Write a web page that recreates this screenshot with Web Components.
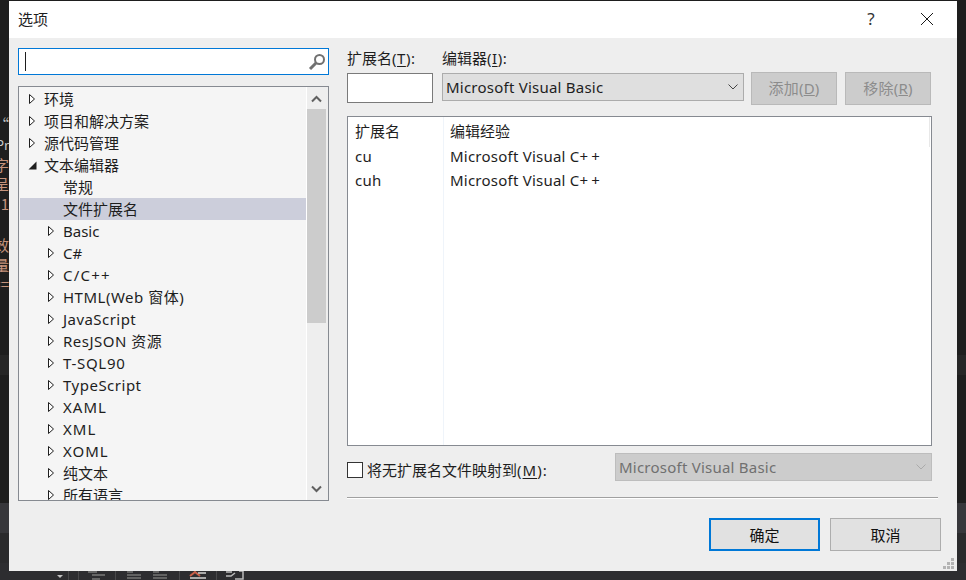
<!DOCTYPE html>
<html>
    <head>
        <meta charset="utf-8" />
        <title>选项</title>
        <style>
            html, body {
                margin: 0;
                width: 966px;
                height: 580px;
                overflow: hidden;
                background: #1e1e1e;
                font-family: "Noto Sans", "Noto Sans CJK SC", sans-serif;
            }
        </style>
    </head>
    <body>
        <ide-backdrop>
            <options-dialog>
                <tree-view slot="tree">
                    <tree-row arrow="closed">环境</tree-row>
                    <tree-row arrow="closed">项目和解决方案</tree-row>
                    <tree-row arrow="closed">源代码管理</tree-row>
                    <tree-row arrow="open">文本编辑器</tree-row>
                    <tree-row level="1">常规</tree-row>
                    <tree-row level="1" selected>文件扩展名</tree-row>
                    <tree-row level="1" arrow="closed">Basic</tree-row>
                    <tree-row level="1" arrow="closed">C#</tree-row>
                    <tree-row level="1" arrow="closed" style="letter-spacing: 1.2px">C/C++</tree-row>
                    <tree-row level="1" arrow="closed" style="letter-spacing: 0.5px">HTML(Web 窗体)</tree-row>
                    <tree-row level="1" arrow="closed" style="letter-spacing: 0.45px">JavaScript</tree-row>
                    <tree-row level="1" arrow="closed" style="letter-spacing: 0.5px">ResJSON 资源</tree-row>
                    <tree-row level="1" arrow="closed" style="letter-spacing: 0.7px">T-SQL90</tree-row>
                    <tree-row level="1" arrow="closed" style="letter-spacing: 0.5px">TypeScript</tree-row>
                    <tree-row level="1" arrow="closed" style="letter-spacing: 1px">XAML</tree-row>
                    <tree-row level="1" arrow="closed" style="letter-spacing: 1px">XML</tree-row>
                    <tree-row level="1" arrow="closed" style="letter-spacing: 1px">XOML</tree-row>
                    <tree-row level="1" arrow="closed">纯文本</tree-row>
                    <tree-row level="1" arrow="closed">所有语言</tree-row>
                </tree-view>
                <ext-list slot="list">
                    <ext-row head name="扩展名">编辑经验</ext-row>
                    <ext-row name="cu">Microsoft Visual C<span style="letter-spacing: 3.2px">++</span></ext-row>
                    <ext-row name="cuh">Microsoft Visual C<span style="letter-spacing: 3.2px">++</span></ext-row>
                </ext-list>
            </options-dialog>
        </ide-backdrop>

        <template id="backdrop">
            <style>
                :host {
                    display: block;
                    position: relative;
                    width: 966px;
                    height: 580px;
                    overflow: hidden;
                    background: #1e1e1e;
                }
                .band { position: absolute; left: 0; right: 0; }
                .b1 { top: 355px; height: 20px; background: #262626; }
                .b2 { top: 503px; height: 30px; background: #37373b; }
                .b3 { top: 533px; height: 30px; background: #2a2a2c; }
                .b4 { top: 563px; bottom: 0; background: #2d2d30; }
                .code {
                    position: absolute;
                    right: 957px;
                    width: 30px;
                    height: 16px;
                    overflow: hidden;
                    text-align: right;
                    white-space: nowrap;
                    color: #c5937c;
                    font: 15px/16px "Noto Sans CJK SC", "Liberation Mono", monospace;
                }
                .short { height: 14px; line-height: 14px; }
                .tools { position: absolute; left: 0; top: 571px; }
            </style>
            <div class="band b1"></div>
            <div class="band b2"></div>
            <div class="band b3"></div>
            <div class="band b4"></div>
            <span class="code" style="top: 116px; color: #bbb">“</span>
            <span class="code" style="top: 137px; color: #ccc; font-size: 13px">Pr</span>
            <span class="code" style="top: 157px">字</span>
            <span class="code" style="top: 176px">呈</span>
            <span class="code short" style="top: 197px">.1</span>
            <span class="code" style="top: 237px">效</span>
            <span class="code" style="top: 257px">量</span>
            <span class="code short" style="top: 277px">==</span>
            <svg class="tools" width="260" height="9" viewBox="0 0 260 9">
                <path d="M57 4h6l-3 3z" fill="#c0c0c0" />
                <path d="M68.500 0v9M78.500 0v9M115.500 0v9M179.500 0v9M216.500 0v9" stroke="#48484a" />
                <path d="M88 1h9M92 4h13M92 8h8" stroke="#666" stroke-width="2" />
                <path d="M127 1h6M127 4h14M127 7h14M153 1h6M153 4h14M153 7h14" stroke="#626262" stroke-width="2" />
                <path d="M190 5l5-4 5 4" stroke="#c9604a" stroke-width="2" fill="none" />
                <path d="M198 2h8M190 7h16" stroke="#aaa" stroke-width="2" />
                <path d="M226 1h6M226 5h5l4-3M239 0h4v8h-8" stroke="#bbb" stroke-width="1.500" fill="none" />
            </svg>
            <slot></slot>
        </template>

        <template id="dialog">
            <style>
                :host {
                    display: flex;
                    flex-direction: column;
                    position: absolute;
                    left: 9px;
                    top: 1px;
                    width: 948px;
                    height: 570px;
                    background: #eeeeee;
                    color: #1e1e1e;
                    font: 15px/20px "Noto Sans", "Noto Sans CJK SC", sans-serif;
                }
                .title {
                    display: flex;
                    align-items: center;
                    box-sizing: border-box;
                    height: 37px;
                    padding: 0 0 1px 9px;
                    background: #fff;
                }
                .title .name { flex: 1; margin-top: -1px; }
                .help { width: 16px; text-align: center; margin-right: 41px; color: #333; font-size: 17px; }
                .close { margin-right: 23px; display: block; }
                .body {
                    flex: 1;
                    display: flex;
                    position: relative;
                    gap: 18px;
                    padding: 10px 0 0 9px;
                }
                .left { width: 311px; display: flex; flex-direction: column; gap: 11px; }
                .right { width: 594px; }
                .top-grid {
                    display: grid;
                    grid-template-columns: 86px 302px 86px 86px;
                    column-gap: 9px 7px;
                    grid-template-rows: 24px auto;
                    width: 584px;
                }
                .lab { align-self: center; margin-top: -4px; white-space: nowrap; }
                .lab u, .map u { text-underline-offset: 2px; }
                .tail { letter-spacing: 0.5px; }
                .ext-lab { grid-column: 1; }
                .ed-lab { grid-column: 2 / 5; margin-left: 9px; }
                .ext-input {
                    box-sizing: border-box;
                    height: 30px;
                    margin-top: 1px;
                    background: #fff;
                    border: 1px solid #7a7a7a;
                }
                .cb1 { margin: 1px 0 0 9px; width: 302px; letter-spacing: 0.23px; }
                .b1 { margin-left: 16px; }
                .b2 { margin-left: 24px; }
                .list-wrap { margin-top: 11px; width: 585px; height: 330px; }
                .map-row {
                    display: flex;
                    align-items: center;
                    width: 585px;
                    margin-top: 7px;
                    height: 28px;
                }
                .map-row check-box { margin-top: 6px; }
                .map { flex: 1; margin: 6px 0 0 4px; color: #1e1e1e; }
                .cb2 { width: 317px; letter-spacing: 0.23px; }
                .rule {
                    height: 1px;
                    width: 591px;
                    margin-top: 16px;
                    background: #a0a0a0;
                    box-shadow: 0 1px 0 #fff;
                }
                .actions {
                    display: flex;
                    gap: 10px;
                    margin-top: 20px;
                    padding-left: 362px;
                }
                .grip { position: absolute; right: 3px; bottom: 2px; display: block; }
            </style>
            <div class="title">
                <span class="name">选项</span>
                <span class="help">?</span>
                <svg class="close" width="14" height="14" viewBox="0 0 14 14">
                    <path d="M1 1l12 12M13 1L1 13" stroke="#1a1a1a" stroke-width="1" fill="none" />
                </svg>
            </div>
            <div class="body">
                <div class="left">
                    <search-box></search-box>
                    <slot name="tree"></slot>
                </div>
                <div class="right">
                    <div class="top-grid">
                        <span class="lab ext-lab">扩展名<span class="tail">(<u>T</u>):</span></span>
                        <span class="lab ed-lab">编辑器<span class="tail">(<u>I</u>):</span></span>
                        <div class="ext-input"></div>
                        <combo-box class="cb1" text="Microsoft Visual Basic"></combo-box>
                        <push-button class="b1" disabled>添加(<u>D</u>)</push-button>
                        <push-button class="b2" disabled>移除(<u>R</u>)</push-button>
                    </div>
                    <div class="list-wrap"><slot name="list"></slot></div>
                    <div class="map-row">
                        <check-box></check-box>
                        <span class="map">将无扩展名文件映射到<span class="tail" style="letter-spacing: 1px">(<u>M</u>):</span></span>
                        <combo-box class="cb2" disabled text="Microsoft Visual Basic"></combo-box>
                    </div>
                    <div class="rule"></div>
                    <div class="actions">
                        <push-button primary style="width: 111px; height: 33px">确定</push-button>
                        <push-button style="width: 111px; height: 33px">取消</push-button>
                    </div>
                </div>
                <svg class="grip" width="11" height="11" viewBox="0 0 11 11" fill="#b4b4b4">
                    <path d="M8 0h3v3H8zM4 4h3v3H4zM8 4h3v3H8zM0 8h3v3H0zM4 8h3v3H4zM8 8h3v3H8z" />
                </svg>
            </div>
        </template>

        <template id="search">
            <style>
                :host {
                    display: flex;
                    align-items: center;
                    box-sizing: border-box;
                    height: 27px;
                    background: #fff;
                    border: 1px solid #0078d7;
                    padding: 0 2px 0 6px;
                }
                .caret { width: 1px; height: 19px; background: #1e1e1e; }
                .sp { flex: 1; }
            </style>
            <div class="caret"></div>
            <div class="sp"></div>
            <svg width="18" height="18" viewBox="0 0 18 18">
                <circle cx="11.500" cy="6.500" r="4.500" fill="none" stroke="#717171" stroke-width="2" />
                <path d="M8 10l-6 6" stroke="#717171" stroke-width="3" />
            </svg>
        </template>

        <template id="tree">
            <style>
                :host {
                    display: flex;
                    box-sizing: border-box;
                    height: 415px;
                    background: #f5f5f5;
                    border: 1px solid #868a91;
                    overflow: hidden;
                }
                .rows {
                    width: 286px;
                    flex: none;
                    margin-left: 1px;
                    padding-top: 1px;
                    overflow: hidden;
                    border-right: 1px solid #fff;
                }
                .bar {
                    flex: 1;
                    background: #eeeeee;
                    display: flex;
                    flex-direction: column;
                    align-items: stretch;
                }
                .btn { height: 22px; display: flex; align-items: center; padding-left: 4px; flex: none; }
                .btn.up { padding-top: 2px; box-sizing: border-box; }
                .thumb { width: 19px; height: 214px; background: #cccccc; flex: none; }
                .sp { flex: 1; }
            </style>
            <div class="rows"><slot></slot></div>
            <div class="bar">
                <div class="btn up">
                    <svg width="11" height="8" viewBox="0 0 11 8">
                        <path d="M1 6.500l4.500-4.500 4.500 4.500" fill="none" stroke="#606060" stroke-width="2" />
                    </svg>
                </div>
                <div class="thumb"></div>
                <div class="sp"></div>
                <div class="btn">
                    <svg width="11" height="8" viewBox="0 0 11 8">
                        <path d="M1 1.500l4.500 4.500 4.500-4.500" fill="none" stroke="#606060" stroke-width="2" />
                    </svg>
                </div>
            </div>
        </template>

        <template id="row">
            <style>
                :host {
                    display: flex;
                    align-items: center;
                    height: 22px;
                    white-space: nowrap;
                    color: #1e1e1e;
                }
                :host([selected]) { background: #cccedb; }
                :host([level="1"]) { padding-left: 19px; }
                .slot-arrow { width: 24px; flex: none; display: flex; justify-content: center; }
            </style>
            <div class="slot-arrow"></div>
            <slot></slot>
        </template>

        <template id="combo">
            <style>
                :host {
                    display: flex;
                    align-items: center;
                    box-sizing: border-box;
                    height: 28px;
                    padding: 0 5px 0 3px;
                    background: #dfdfdf;
                    border: 1px solid #acacac;
                    color: #1e1e1e;
                }
                :host([disabled]) { background: #cccccc; border-color: #bdbdbd; color: #707070; }
                .t { flex: 1; white-space: nowrap; margin-top: -1px; }
                path { stroke: #444; }
                :host([disabled]) path { stroke: #aaa; }
            </style>
            <span class="t"></span>
            <svg width="10" height="6" viewBox="0 0 10 6">
                <path d="M0.500 0.500l4.500 4.500 4.500-4.500" fill="none" stroke-width="1" />
            </svg>
        </template>

        <template id="button">
            <style>
                :host {
                    display: flex;
                    align-items: center;
                    justify-content: center;
                    box-sizing: border-box;
                    height: 33px;
                    width: 86px;
                    background: #e1e1e1;
                    border: 1px solid #adadad;
                    color: #111;
                }
                :host([disabled]) {
                    background: #cccccc;
                    border-color: #b9b9b9;
                    color: #8c8c8c;
                    padding-bottom: 2px;
                    letter-spacing: 0.2px;
                }
                :host([primary]) { border: 2px solid #0078d7; }
            </style>
            <span><slot></slot></span>
        </template>

        <template id="list">
            <style>
                :host {
                    display: flex;
                    flex-direction: column;
                    position: relative;
                    box-sizing: border-box;
                    height: 330px;
                    background: #fff;
                    border: 1px solid #868a91;
                    padding-top: 1px;
                }
                .sep { position: absolute; left: 95px; top: 0; bottom: 0; width: 1px; background: #eff4fa; }
                .edge { position: absolute; right: 1px; top: 0; height: 30px; width: 1px; background: #e8e8e8; }
            </style>
            <div class="sep"></div>
            <div class="edge"></div>
            <slot></slot>
        </template>

        <template id="ext">
            <style>
                :host {
                    display: grid;
                    grid-template-columns: 95px 1fr;
                    height: 24px;
                    align-items: center;
                    color: #1e1e1e;
                }
                :host([head]) { height: 26px; }
                .a { padding-left: 7px; letter-spacing: 0.3px; }
                .b { padding-left: 7px; letter-spacing: 0.23px; }
                :host([head]) .a, :host([head]) .b { letter-spacing: 0; }
            </style>
            <span class="a"></span>
            <span class="b"><slot></slot></span>
        </template>

        <template id="check">
            <style>
                :host {
                    display: block;
                    box-sizing: border-box;
                    width: 16px;
                    height: 16px;
                    background: #fff;
                    border: 1px solid #333;
                }
            </style>
        </template>

        <script>
            // 每个元素都从对应的 template 克隆自己的 shadow DOM
            function fromTemplate(id) {
                return class extends HTMLElement {
                    constructor() {
                        super()
                        this.attachShadow({ mode: 'open' }).appendChild(
                            document.querySelector(id).content.cloneNode(true)
                        )
                    }
                }
            }

            customElements.define('ide-backdrop', fromTemplate('#backdrop'))
            customElements.define('options-dialog', fromTemplate('#dialog'))
            customElements.define('search-box', fromTemplate('#search'))
            customElements.define('tree-view', fromTemplate('#tree'))
            customElements.define('push-button', fromTemplate('#button'))
            customElements.define('ext-list', fromTemplate('#list'))
            customElements.define('check-box', fromTemplate('#check'))

            customElements.define(
                'tree-row',
                class extends fromTemplate('#row') {
                    connectedCallback() {
                        const box = this.shadowRoot.querySelector('.slot-arrow')
                        const arrow = this.getAttribute('arrow')
                        if (arrow === 'closed') {
                            box.innerHTML = '<svg width="8" height="12" viewBox="0 0 8 12"><path d="M1.500 1.500v9l5-4.500z" fill="#fff" stroke="#1e1e1e" /></svg>'
                        } else if (arrow === 'open') {
                            box.innerHTML = '<svg width="9" height="9" viewBox="0 0 9 9"><path d="M8.500 0.500v8h-8z" fill="#1e1e1e" /></svg>'
                        }
                    }
                }
            )

            customElements.define(
                'combo-box',
                class extends fromTemplate('#combo') {
                    connectedCallback() {
                        this.shadowRoot.querySelector('.t').textContent = this.getAttribute('text')
                    }
                }
            )

            customElements.define(
                'ext-row',
                class extends fromTemplate('#ext') {
                    connectedCallback() {
                        this.shadowRoot.querySelector('.a').textContent = this.getAttribute('name')
                    }
                }
            )
        </script>
    </body>
</html>
